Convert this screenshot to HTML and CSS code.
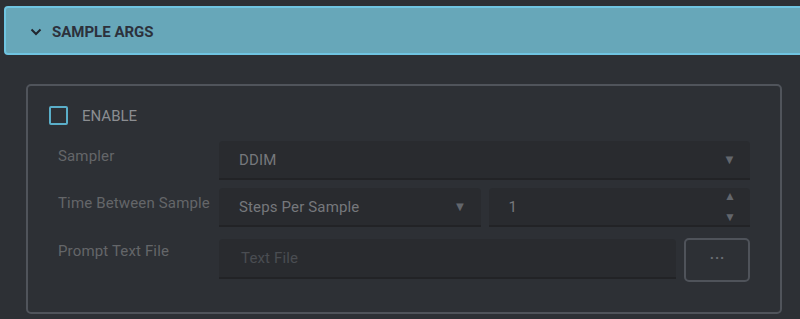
FILE: index.html
```html
<!DOCTYPE html>
<html lang="en">
<head>
    <meta charset="UTF-8">
    <meta name="viewport" content="width=device-width, initial-scale=1.0">
    <title>Sample Args</title>
    <link rel="stylesheet" href="styles.css">
</head>
<body>

    <!-- Collapsible section header -->
    <div class="section-header">
        <svg class="chevron" width="12" height="8" viewBox="0 0 12 8">
            <path d="M1.5 1.5 L6 6 L10.5 1.5" fill="none" stroke="#22262e" stroke-width="2"/>
        </svg>
        <span class="section-title">SAMPLE ARGS</span>
    </div>

    <!-- Panel with the sample settings -->
    <div class="panel">
        <label class="enable">
            <span class="checkbox"></span>
            <span class="enable-text">ENABLE</span>
        </label>

        <div class="rows">
            <div class="label">Sampler</div>
            <div class="field">
                <div class="select wide">
                    <span>DDIM</span>
                    <span class="arrow">&#9660;</span>
                </div>
            </div>

            <div class="label">Time Between Sample</div>
            <div class="field">
                <div class="select half">
                    <span>Steps Per Sample</span>
                    <span class="arrow">&#9660;</span>
                </div>
                <div class="select half">
                    <span>1</span>
                    <span class="spinner">
                        <span>&#9650;</span>
                        <span>&#9660;</span>
                    </span>
                </div>
            </div>

            <div class="label label-file">Prompt Text File</div>
            <div class="field file-row">
                <div class="select text-input">
                    <span class="placeholder">Text File</span>
                </div>
                <button class="browse">&middot;&middot;&middot;</button>
            </div>
        </div>
    </div>

</body>
</html>
```

FILE: styles.css
```css
body {
    margin: 0;
    background: #2d3035;
    font-family: Roboto, "Noto Sans", sans-serif;
    font-size: 15px;
    overflow: hidden;
}
.section-header {
    display: flex;
    align-items: center;
    height: 43px;
    margin: 6px -20px 0 4px;
    padding: 2px 0 0 24px;
    box-sizing: content-box;
    background: #67a7b9;
    border: 2px solid #6fc4e1;
    border-radius: 4px;
}
.chevron {
    margin-right: 10px;
}
.section-title {
    font-weight: bold;
    color: #2c313c;
    font-size: 15px;
}
.panel {
    width: 752px;
    height: 226px;
    margin: 29px 0 0 26px;
    border: 2px solid #50545b;
    border-radius: 5px;
}
.enable {
    display: flex;
    align-items: center;
    margin: 20px 0 0 21px;
}
.checkbox {
    width: 15px;
    height: 15px;
    border: 2px solid #5aaec9;
    border-radius: 2px;
}
.enable-text {
    margin-left: 14px;
    color: #8b8d91;
}
.rows {
    display: grid;
    grid-template-columns: 161px 531px;
    row-gap: 8px;
    margin: 16px 0 0 30px;
}
.label {
    padding-top: 6px;
    color: #646669;
    white-space: nowrap;
    letter-spacing: 0.15px;
}
.label-file {
    padding-top: 4px;
    margin-top: 3px;
}
.field {
    display: flex;
    gap: 8px;
}
.select {
    display: flex;
    align-items: center;
    justify-content: space-between;
    height: 37px;
    padding: 0 14px 0 20px;
    background: #292b2f;
    border-bottom: 2px solid #222326;
    border-radius: 4px 4px 0 0;
    color: #76787c;
    letter-spacing: 0.15px;
}
.wide {
    flex: 1;
}
.half {
    flex: 1;
}
.arrow {
    font-size: 13px;
    color: #62666c;
}
.spinner {
    display: flex;
    flex-direction: column;
    justify-content: space-between;
    height: 34px;
    font-size: 12px;
    color: #62666c;
    line-height: 13px;
}
.file-row {
    margin-top: 3px;
    align-items: flex-start;
}
.text-input {
    flex: 1;
    height: 38px;
    margin-top: 1px;
    padding-left: 22px;
}
.placeholder {
    color: #4a4d52;
}
.browse {
    width: 66px;
    height: 44px;
    padding: 0 0 4px 1px;
    background: transparent;
    border: 2px solid #4f535a;
    border-radius: 5px;
    color: #6a6e74;
    font-size: 14px;
    font-weight: bold;
    letter-spacing: 1px;
    font-family: Roboto, sans-serif;
}
```
